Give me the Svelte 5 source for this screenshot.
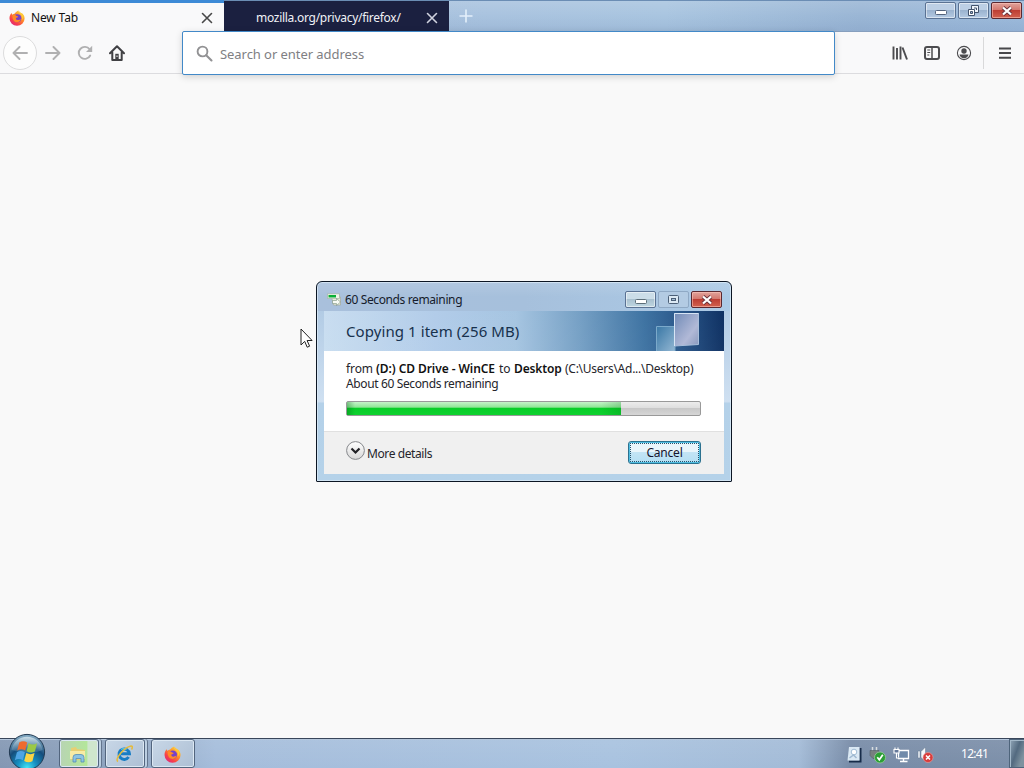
<script>
  const progress = 77.5;
</script>

{#snippet closeIcon(color)}
  <svg class="tab-close" width="12" height="12" viewBox="0 0 12 12"><path d="M1.5 1.5l9 9M10.5 1.5l-9 9" stroke={color} stroke-width="1.6" stroke-linecap="round" /></svg>
{/snippet}

{#snippet firefox(size)}
  <svg width={size} height={size} viewBox="0 0 16 16">
    <defs>
      <linearGradient id="fx{size}" x1="0.85" y1="0.1" x2="0.2" y2="0.95">
        <stop offset="0" stop-color="#ffd93a" /><stop offset="0.4" stop-color="#ff8a2a" /><stop offset="0.75" stop-color="#f8404a" /><stop offset="1" stop-color="#e02a78" />
      </linearGradient>
    </defs>
    <path d="M2.4 3.1l1 1.6C4 4 5 3.5 5.8 3.4 6.7 1.9 8 1.2 9.4.4c0 1.6 1.1 2.3 2.4 3.4l1.1-.8c1.7 1.6 2.7 3.2 2.7 5.4A7.5 7.5 0 0 1 8 15.8 7.4 7.4 0 0 1 .5 8.5C.5 6.4 1.2 4.5 2.4 3.1z" fill="url(#fx{size})" />
    <circle cx="8.3" cy="8.2" r="4" fill="#7542c8" />
    <path d="M3.6 5.2C5 4.5 6.500 5 7.600 6c.9.1 1.400.4 1.500.8-.3.7-1.600.7-2.100 1.200-.4 1 .4 2 1.700 2 1.600 0 2.300-1 3.100-.8-.6 2-2 3-3.900 3-2.800 0-4.900-2.700-4.300-7z" fill="#ff8b25" />
    <path d="M9.4.4c0 1.700 1.600 2.800 2.800 4.600 1 1.600 1.200 3.400.5 5.200 1.400-1 1.900-3 1.400-5C12.500 2.500 10.500 2 9.400.4z" fill="#ffc936" />
  </svg>
{/snippet}

<div class="screen">
  <header class="tabstrip">
    <div class="tab active">
      {@render firefox(16)}
      <span class="label newtab">New Tab</span>
      {@render closeIcon('#484848')}
    </div>
    <div class="tab dark">
      <span class="label moz">mozilla.org/privacy/firefox/</span>
      {@render closeIcon('#d0d2df')}
    </div>
    <svg class="plus" width="14" height="14" viewBox="0 0 14 14"><path d="M7 .5v13M.5 7h13" stroke="#e4f0fb" stroke-width="1.6" /></svg>
    <div class="controls">
      <span class="wb min"><svg width="12" height="6" viewBox="0 0 12 6"><rect x=".5" y=".5" width="11" height="4" rx="1" fill="#fff" stroke="#53637c" /></svg></span>
      <span class="wb"><svg width="13" height="12" viewBox="0 0 13 12"><path d="M4.500.5h7v7h-7z" fill="#eef4fa" stroke="#43536c" /><path d="M7 3h2.500v2" fill="none" stroke="#43536c" /><path d="M1.500 4.500h6v6h-6z" fill="#fff" stroke="#43536c" /><path d="M3.500 6.500h2v2h-2z" fill="#9bb5d2" stroke="#43536c" /></svg></span>
      <span class="wb red"><svg width="12" height="10" viewBox="0 0 12 10"><path d="M2 1.500l8 7M10 1.500l-8 7" stroke="#68313a" stroke-width="4" /><path d="M2 1.500l8 7M10 1.500l-8 7" stroke="#fff" stroke-width="2.300" /></svg></span>
    </div>
  </header>

  <nav class="toolbar">
    <span class="back"><svg width="16" height="14" viewBox="0 0 16 14"><path d="M15 7H1.500M7.500 1l-6 6 6 6" fill="none" stroke="#b0b0b1" stroke-width="1.900" stroke-linecap="round" stroke-linejoin="round" /></svg></span>
    <svg class="fwd" width="16" height="14" viewBox="0 0 16 14"><path d="M1 7h13.500M8.500 1l6 6-6 6" fill="none" stroke="#b0b0b1" stroke-width="1.900" stroke-linecap="round" stroke-linejoin="round" /></svg>
    <svg class="reload" width="16" height="16" viewBox="0 0 16 16"><path d="M13.200 10.500a6 6 0 1 1-.6-6.200" fill="none" stroke="#b0b0b1" stroke-width="1.900" stroke-linecap="round" /><path d="M15.200.8v6.100H9z" fill="#b0b0b1" /></svg>
    <svg class="home" width="16" height="16" viewBox="0 0 16 16"><path d="M1 8.200l7-7 7 7M3.300 7.500V15h9.400V7.500" fill="none" stroke="#414144" stroke-width="2" stroke-linecap="round" stroke-linejoin="round" /><path d="M6.300 14V8.800h3.400V14z" fill="#414144" /><path d="M8 10.500v1.500" stroke="#fff" /></svg>
    <div class="url">
      <svg width="17" height="17" viewBox="0 0 17 17"><circle cx="6.500" cy="6.500" r="4.900" fill="none" stroke="#929294" stroke-width="1.900" /><path d="M10.200 10.200l5.300 5.300" stroke="#929294" stroke-width="2.100" stroke-linecap="round" /></svg>
      <span class="ph">Search or enter address</span>
    </div>
    <div class="tools">
      <svg width="16" height="16" viewBox="0 0 16 16"><path d="M1.500 1.500v13M5 3v11.500M8.500 1.500v13" stroke="#4c4c4f" stroke-width="1.900" /><path d="M10.500 2.500l4.500 12" stroke="#4c4c4f" stroke-width="1.900" /></svg>
      <svg width="16" height="16" viewBox="0 0 16 16"><rect x="1" y="2" width="14" height="12" rx="2" fill="none" stroke="#4c4c4f" stroke-width="2" /><path d="M8 2v12" stroke="#4c4c4f" stroke-width="1.500" /><path d="M3.300 5h2.900M3.300 7.500h2.900M3.300 10h2" stroke="#4c4c4f" /></svg>
      <svg width="16" height="16" viewBox="0 0 16 16"><circle cx="8" cy="8" r="6.600" fill="none" stroke="#4c4c4f" stroke-width="1.100" /><circle cx="8" cy="6" r="2.700" fill="#4c4c4f" /><path d="M3.500 9.500h9c-.4 2.200-2.200 3.700-4.500 3.700s-4.100-1.500-4.500-3.700z" fill="#4c4c4f" /></svg>
    </div>
    <div class="menu"><svg width="14" height="14" viewBox="0 0 14 14"><path d="M1 2.500h12M1 7h12M1 11.800h12" stroke="#48484b" stroke-width="1.900" /></svg></div>
  </nav>

  <main></main>

  <footer class="taskbar">
    <span class="start">
      <svg width="38" height="38" viewBox="0 0 38 38">
        <defs>
          <radialGradient id="orb" cx=".5" cy=".95" r=".9"><stop offset="0" stop-color="#45e6f5" /><stop offset=".3" stop-color="#1691c2" /><stop offset=".65" stop-color="#154d7c" /><stop offset="1" stop-color="#7fa6bf" /></radialGradient>
          <linearGradient id="gloss" x2="0" y2="1"><stop stop-color="#d9e8ef" stop-opacity=".85" /><stop offset="1" stop-color="#7da2ba" stop-opacity=".25" /></linearGradient>
        </defs>
        <circle cx="19" cy="19" r="17.600" fill="url(#orb)" stroke="#223a52" />
        <path d="M3.500 17a15.700 15.700 0 0 1 31 0c-9 4-20 3-31 0z" fill="url(#gloss)" />
        <g transform="translate(-2.500 -2.500) scale(1.140)">
          <path d="M12 10.500c2.400-1.500 4.800-1.400 7 .1l-1.700 7c-2.200-1.500-4.600-1.600-7-.1z" fill="#ee6a2e" />
          <path d="M20.200 11.200c2.600 1.400 5 1.400 7.500 0l-1.900 7.200c-2.500 1.400-4.900 1.200-7.300-.1z" fill="#9bc945" />
          <path d="M10 19c2.400-1.500 4.700-1.300 7 .1l-1.800 7c-2.200-1.400-4.600-1.500-7-.1z" fill="#4ea4e4" />
          <path d="M18.200 19.800c2.500 1.300 4.900 1.400 7.300 0l-1.900 7.100c-2.400 1.400-4.800 1.300-7.200-.1z" fill="#fbd444" />
        </g>
      </svg>
    </span>
    <span class="task stack green"><svg width="20" height="18" viewBox="0 0 20 18"><path d="M3 3l5-1 1 2 8 1v10H3z" fill="#e7cf72" /><path d="M2 6h15v8H2z" fill="#f7eba5" /><path d="M5 17v-4.500q0-3 3-3h5q3 0 3 3V17h-3v-3.500H8V17z" fill="#8cc4e4" stroke="#548eb5" stroke-width=".8" /></svg></span>
    <span class="task stack"><svg width="18" height="18" viewBox="0 0 18 18"><path d="M13.600 12a5.200 5.200 0 1 1 .8-3.300H6" fill="none" stroke="#187dc4" stroke-width="3" /><path d="M6 4.500a5 5 0 0 1 5.500 0" fill="none" stroke="#54c5ed" stroke-width="1.200" /><path d="M3 16.500c-4-2 6-14 13-15.500 2 0 1.500 2 .5 3.500" fill="none" stroke="#e4bb3e" stroke-width="1.500" /></svg></span>
    <span class="task last">{@render firefox(17)}</span>
    <div class="tray">
      <svg width="16" height="18" viewBox="0 0 16 18"><path d="M3 15.500h11.500V2" fill="none" stroke="#172b49" stroke-width="2" /><path d="M3 1h10.500v13.500H1.500z" fill="#dbe9f4" /><circle cx="8" cy="6" r="2.800" fill="#fff" stroke="#a2bdd5" /><path d="M3.500 12l4-3 3 3" fill="none" stroke="#a0b9d1" stroke-width="1.500" /></svg>
      <svg width="17" height="18" viewBox="0 0 17 18"><path d="M3.500 1v4M7.500 1v4" stroke="#d8dddf" stroke-width="1.500" /><path d="M1 4.500h9v5l-2 3H4l-3-3z" fill="#777f80" stroke="#515d67" stroke-width=".6" /><circle cx="11" cy="11.500" r="5.500" fill="#2b9e35" stroke="#a2d2a5" stroke-width=".7" /><path d="M8.300 11.300l2 2.500 3.500-5" fill="none" stroke="#fff" stroke-width="1.700" /></svg>
      <svg width="17" height="18" viewBox="0 0 17 18"><path d="M5.500 4.500h10v8h-10z" fill="#718baa" stroke="#fff" stroke-width="1.300" /><path d="M10.500 13v2.500M7 15.500h7.500" stroke="#fff" stroke-width="1.400" /><path d="M2 1.500v2M5 1.500v2M1 3.500h5V7H1zM3.500 7v5h2" fill="#65799a" stroke="#fff" stroke-width="1.100" /></svg>
      <svg width="17" height="18" viewBox="0 0 17 18"><path d="M1 5h2v7H1zM4 5.500L8.500 1v14.500L4 11.500z" fill="#f5f8fb" stroke="#657891" stroke-width=".5" /><circle cx="11" cy="11.500" r="5" fill="#d83c3b" stroke="#eea09e" stroke-width=".6" /><path d="M9 9.500l4 4M13 9.500l-4 4" stroke="#fff" stroke-width="1.500" /></svg>
    </div>
    <span class="clock">12:41</span>
    <span class="peek"></span>
  </footer>

  <section class="dialog">
    <div class="dtitle">
      <svg width="15" height="14" viewBox="0 0 14 14"><path d="M4 4h9v8H6z" fill="#e9eddb" stroke="#a2a89c" stroke-width=".7" /><path d="M0 .8h12v4.700H0z" fill="#eef5e9" stroke="#9cad9b" stroke-width=".6" /><path d="M1 2h7.500v2.500H1z" fill="#0aaf35" /><path d="M5 7.500h4V5.500l4 3.500-4 3.500v-2H5z" fill="#f8fbf5" stroke="#7b927f" stroke-width=".6" /></svg>
      <span class="dcap">60 Seconds remaining</span>
      <div class="controls dc">
        <span class="wb min pale"><svg width="12" height="6" viewBox="0 0 12 6"><rect x=".5" y=".5" width="11" height="4" rx="1" fill="#fff" stroke="#5c6e79" /></svg></span>
        <span class="wb off"><svg width="11" height="9" viewBox="0 0 11 9"><rect x=".5" y=".5" width="10" height="8" rx="1" fill="#dce9f4" stroke="#4b5f77" /><rect x="3.500" y="3.500" width="4" height="2" fill="#a5bdd5" stroke="#4b5f77" /></svg></span>
        <span class="wb red"><svg width="12" height="10" viewBox="0 0 12 10"><path d="M2 1.500l8 7M10 1.500l-8 7" stroke="#68313a" stroke-width="4" /><path d="M2 1.500l8 7M10 1.500l-8 7" stroke="#fff" stroke-width="2.300" /></svg></span>
      </div>
    </div>
    <div class="client">
      <div class="banner">
        <span class="heading">Copying 1 item (256 MB)</span>
        <svg width="46" height="40" viewBox="0 0 46 40">
          <defs><linearGradient id="pane" x2="1" y2="1"><stop stop-color="#718bb7" /><stop offset=".65" stop-color="#b1b9d7" /><stop offset="1" stop-color="#8999bd" /></linearGradient><linearGradient id="small" x2="1" y2="1"><stop stop-color="#3977a5" /><stop offset="1" stop-color="#93b7d3" /></linearGradient></defs>
          <path d="M.5 40V15.500H19V40" fill="url(#small)" stroke="#7ba9ca" />
          <path d="M18.500 2.500h24v31l-24 1.500z" fill="url(#pane)" stroke="#a9bfdb" /><path d="M18.500 35V2.500h24" fill="none" stroke="#d7e5f5" />
        </svg>
      </div>
      <div class="body">
        <p class="from"><span class="f1">from</span> <b class="f2">(D:) CD Drive - WinCE</b> <span class="f3">to</span> <b class="f4">Desktop</b> <span class="f5">(C:\Users\Ad...\Desktop)</span></p>
        <p class="about">About 60 Seconds remaining</p>
        <div class="bar"><div class="fill" style="width: {progress}%"></div></div>
      </div>
      <div class="actions">
        <svg class="round" width="19" height="19" viewBox="0 0 19 19"><defs><linearGradient id="round" x2="0" y2="1"><stop stop-color="#fff" /><stop offset="1" stop-color="#d7d7d7" /></linearGradient></defs><circle cx="9.500" cy="9.500" r="8.900" fill="url(#round)" stroke="#85878b" /><path d="M5.500 7.500l4 4 4-4" fill="none" stroke="#202024" stroke-width="2.200" /></svg>
        <span class="more">More details</span>
        <button><span>Cancel</span></button>
      </div>
    </div>
  </section>

  <svg class="cursor" width="13" height="21" viewBox="0 0 13 21"><path d="M1 1v16l3.700-3.600 2.500 5.800 2.400-1-2.500-5.700h5z" fill="#fff" stroke="#222" stroke-linejoin="round" /></svg>
</div>

<style>
  :global(body) { margin: 0; overflow: hidden; }
  .screen { position: relative; width: 1024px; height: 768px; display: flex; flex-direction: column; background: #f9f9f9; font: 12px/16px "Noto Sans", "Open Sans", sans-serif; color: #111; overflow: hidden; }
  .screen * { box-sizing: border-box; }
  svg { display: block; flex: none; }
  span, p, b { white-space: pre; }
  .tabstrip { height: 32px; flex: none; display: flex; background: linear-gradient(rgba(255,255,255,.12), rgba(255,255,255,0) 50%, rgba(80,110,160,.12)), linear-gradient(90deg, #a6bdda 0, #a9c3df 48%, #a9c5e0 65%, #9ab6d5 84%, #9cbadb); border-top: 1px solid #6b8db4; border-bottom: 1px solid #879fbe; }
  .tab { display: flex; align-items: center; height: 31px; flex: none; }
  .active { width: 224px; margin-top: -1px; height: 32px; background: #f9f9fa; border-top: 3px solid #3d8ad6; padding: 0 11px 0 9px; }
  .newtab { margin-left: 6px; letter-spacing: -.15px; color: #111; }
  .tab-close { margin-left: auto; }
  .dark { width: 225px; padding: 2px 11px 0 32px; background: #1b2040; color: #f0f1f6; }
  .moz { letter-spacing: -.28px; }
  .plus { margin: 8px 0 0 10px; }
  .controls { display: flex; gap: 2px; margin: 1px 2px 0 auto; }
  .wb { width: 31px; height: 17px; display: flex; align-items: center; justify-content: center; border: 1px solid #5a7293; border-radius: 2px; box-shadow: inset 0 0 0 1px rgba(255,255,255,.5); background: linear-gradient(#bccfe5 0 48%, #9bb3cf 50%, #b4cae3); }
  .min { padding-top: 4px; }
  .pale { background: linear-gradient(#cbdde8 0 48%, #a9c1d0 50%, #bfd6e1); }
  .off { border-color: #8fa9c5; background: #b3cbe3; box-shadow: none; }
  .red { border-color: #5a2830; box-shadow: inset 0 0 0 1px rgba(255,200,190,.55); background: linear-gradient(#e0a39c, #d4766c 48%, #bd3e34 50%, #d2614f); }

  .toolbar { height: 42px; flex: none; display: flex; align-items: center; background: #f9f9fa; border-bottom: 1px solid #dcdcdf; padding-left: 3px; }
  .back { width: 34px; height: 34px; border: 1px solid #dcdcdd; border-radius: 50%; display: flex; align-items: center; justify-content: center; background: #fdfdfd; }
  .fwd { margin-left: 8px; }
  .reload { margin-left: 16px; }
  .home { margin-left: 16px; }
  .url { width: 653px; height: 44px; margin: -1px 0 -1px 57px; flex: none; z-index: 1; display: flex; align-items: center; padding: 1px 0 0 13px; background: #fff; border: 1px solid #4289c8; border-radius: 2px; box-shadow: 0 2px 7px rgba(0,0,0,.16); }
  .ph { font-size: 13px; margin: 1px 0 0 7px; color: #808083; letter-spacing: -.06px; }
  .tools { display: flex; gap: 16px; margin-left: 57px; }
  .menu { height: 32px; margin-left: 11px; padding-left: 14px; border-left: 1px solid #d9d9da; display: flex; align-items: center; }
  main { flex: 1; }

  .taskbar { height: 30px; flex: none; display: flex; align-items: stretch; border-top: 1px solid #39465a; box-shadow: inset 0 1px #b5c7dc; background: linear-gradient(rgba(255,255,255,.08), transparent), linear-gradient(90deg, #8397b3 0, #90a6c2 13%, #a5bddb 21%, #a8c2df 60%, #a3bbd7 78%, #778ba7 83%, #7c8fa9 100%); }
  .start { width: 38px; height: 38px; margin: -6px 0 0 8px; flex: none; }
  .task { width: 41px; height: 29px; padding: 1px 2px 0 0; display: flex; align-items: center; justify-content: center; border: 1px solid #52657e; border-radius: 3px; box-shadow: inset 0 0 0 1px #dce8f3; background: linear-gradient(135deg, #c8d7e7, #adbfd4); flex: none; }
  .stack { width: 40px; margin-right: 6px; box-shadow: inset 0 0 0 1px #dce8f3, 2px 0 #bccfe2, 3px 0 #63758e; }
  .start + .task { margin-left: 13px; }
  .green { background: linear-gradient(90deg, #b8d4b3, #b4e69a 70%, #cfe6cd 74%); }
  .last { width: 44px; }
  .tray { display: flex; gap: 7px; align-items: center; margin-left: auto; padding-top: 2px; }
  .clock { width: 28px; color: #fff; margin: 7px 20px 0 27px; letter-spacing: -.7px; }
  .peek { width: 15px; border: 1px solid #4e647b; border-right: 0; box-shadow: inset 1px 1px #a3b8c9; background: linear-gradient(110deg, #91a6b8, #536a80 45%, #7e929f 80%); }

  .dialog { position: absolute; left: 316px; top: 281px; width: 416px; height: 201px; border: 1px solid #0c1624; border-radius: 6px 6px 1px 1px; padding: 0 7px 7px; background: linear-gradient(rgba(255,255,255,.12), transparent 15px), linear-gradient(90deg, #a9c0dc, #a6c0dc 50%, #accae6) top/100% 29px no-repeat, linear-gradient(#a9c5e1 0, #cfe0f1 60%, #b4d1e9 61%, #b5d2e9); box-shadow: inset 0 0 0 1px rgba(226,240,250,.65); }
  .dtitle { height: 29px; display: flex; align-items: center; padding: 6px 0 0 3px; }
  .dcap { margin-left: 3px; color: #151b2b; letter-spacing: -.38px; }
  .dc { margin: 0 2px 0 auto; }
  .client { height: 163px; display: flex; flex-direction: column; background: #fff; }
  .banner { height: 40px; display: flex; justify-content: space-between; padding: 0 22px; background: linear-gradient(rgba(255,255,255,.06), rgba(255,255,255,.08)), linear-gradient(90deg, #c5dbef, #adc9e8 28%, #a0c1df 48%, #6d9ac1 64%, #336b9d 80%, #1b4a80 90%, #002459); }
  .heading { font-size: 15px; line-height: 20px; padding-top: 10px; color: #17314d; letter-spacing: .08px; }
  .body { height: 80px; padding: 10px 23px 0 22px; }
  p { margin: 0; line-height: 15px; height: 15px; color: #25252b; }
  .from { display: flex; gap: 4px; }
  .f1 { letter-spacing: -.1px; width: 26px; }
  .f2 { letter-spacing: -.07px; width: 119px; }
  .f3 { width: 11px; }
  .f4 { letter-spacing: -.15px; width: 47px; }
  .f5 { letter-spacing: -.27px; }
  .about { letter-spacing: -.37px; }
  b { font-weight: 600; color: #111; }
  .bar { margin-top: 10px; width: 355px; height: 15px; border: 1px solid #999; border-radius: 2px; background: linear-gradient(#ececec, #dedede 45%, #c8c8c8 50%, #d6d6d6); }
  .fill { height: 100%; background: linear-gradient(90deg, rgba(0,100,20,.35), transparent 8px calc(100% - 20px), rgba(0,100,20,.2)), linear-gradient(#c5f3c9, #8fe696 40%, #08cd28 48%, #0fd130); }
  .actions { height: 43px; display: flex; align-items: flex-start; padding: 10px 23px 0 22px; background: #f0f0f0; border-top: 1px solid #e0e0e0; }
  .round { margin-top: -1px; }
  .more { margin: 4px 0 0 2px; color: #25252b; letter-spacing: -.4px; }
  button { margin: -1px 0 0 auto; width: 73px; height: 23px; padding: 1px; border: 1px solid #2b718f; border-radius: 3px; background: linear-gradient(#e9f5fb 48%, #c3e4f5 50%, #b4dff4); box-shadow: inset 0 0 0 1px #50bee2; font: inherit; color: #14142d; letter-spacing: -.2px; }
  button span { display: block; height: 19px; line-height: 18px; border: 1px dotted #27516b; }
  .cursor { position: absolute; left: 300px; top: 328px; }
</style>
